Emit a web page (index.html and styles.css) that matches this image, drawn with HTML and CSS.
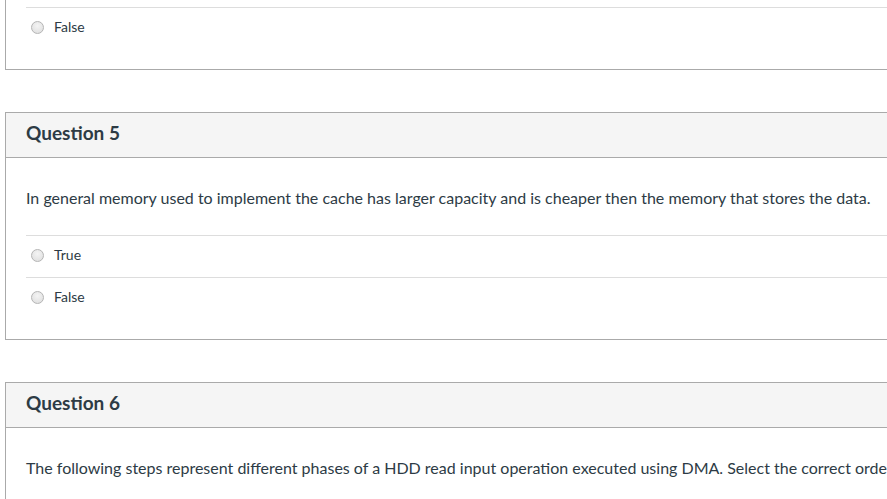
FILE: index.html
```html
<!DOCTYPE html>
<html>
<head>
<meta charset="utf-8">
<link rel="stylesheet" href="styles.css">
</head>
<body>
<div class="page">
  <div class="question partial">
    <div class="answers">
      <div class="answer"><span class="radio"></span><span class="label">False</span></div>
    </div>
  </div>

  <div class="question">
    <div class="q-header"><h2 class="q-title">Question 5</h2></div>
    <div class="q-body">
      <p class="q-text">In general memory used to implement the cache has larger capacity and is cheaper then the memory that stores the data.</p>
      <div class="answers">
        <div class="answer"><span class="radio"></span><span class="label">True</span></div>
        <div class="answer"><span class="radio"></span><span class="label">False</span></div>
      </div>
    </div>
  </div>

  <div class="question">
    <div class="q-header"><h2 class="q-title">Question 6</h2></div>
    <div class="q-body">
      <p class="q-text">The following steps represent different phases of a HDD read input operation executed using DMA. Select the correct order of the phases.</p>
    </div>
  </div>
</div>
</body>
</html>
```
FILE: styles.css
```css
html, body {
  margin: 0;
  padding: 0;
  background: #fff;
  overflow: hidden;
}
body {
  font-family: Lato, "Open Sans", sans-serif;
  color: #2d3b45;
}
.page {
  padding-left: 5px;
  width: 1100px;
}
.question {
  border: 1px solid #aaaaaa;
  margin-bottom: 42px;
  background: #fff;
}
.question.partial {
  border-top: none;
  padding-top: 7px;
}
.q-header {
  background: #f5f5f5;
  border-bottom: 1px solid #aaaaaa;
  display: flex;
  align-items: center;
  padding-left: 20px;
  padding-bottom: 4px;
  box-sizing: border-box;
  height: 45px;
}
.q-title {
  margin: 0;
  font-size: 19px;
  font-weight: 700;
  line-height: 24px;
  color: #2d3b45;
}
.q-body {
  padding-top: 29px;
}
.q-text {
  margin: 0 0 26px 20px;
  font-size: 16px;
  line-height: 22px;
  white-space: nowrap;
}
.answers {
  margin-left: 20px;
  padding-bottom: 20px;
}
.answer {
  border-top: 1px solid #dddddd;
  display: flex;
  align-items: center;
  padding-bottom: 4px;
  box-sizing: border-box;
  height: 42px;
}
.radio {
  width: 11px;
  height: 11px;
  border-radius: 50%;
  border: 1px solid #b5b5b5;
  background: radial-gradient(circle at 50% 35%, #f4f4f4 0%, #dcdcdc 100%);
  margin-left: 5px;
  margin-right: 10px;
  margin-top: 2px;
  box-sizing: content-box;
}
.label {
  font-size: 14px;
  line-height: 18px;
  color: #2d3b45;
}
```
